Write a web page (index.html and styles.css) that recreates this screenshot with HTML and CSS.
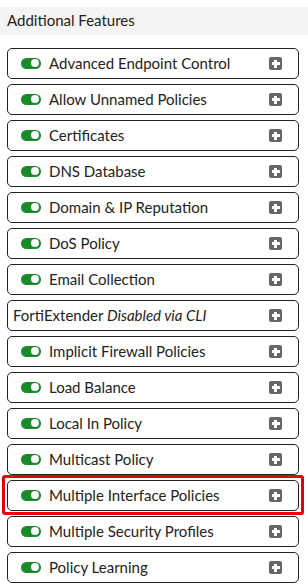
FILE: index.html
```html
<!DOCTYPE html>
<html>
<head>
<meta charset="utf-8">
<link rel="stylesheet" href="styles.css">
</head>
<body>
<div class="header">Additional Features</div>
<div class="list">
  <div class="row"><span class="toggle"></span><span class="label">Advanced Endpoint Control</span><span class="plus"></span></div>
  <div class="row"><span class="toggle"></span><span class="label">Allow Unnamed Policies</span><span class="plus"></span></div>
  <div class="row"><span class="toggle"></span><span class="label">Certificates</span><span class="plus"></span></div>
  <div class="row"><span class="toggle"></span><span class="label">DNS Database</span><span class="plus"></span></div>
  <div class="row"><span class="toggle"></span><span class="label">Domain &amp; IP Reputation</span><span class="plus"></span></div>
  <div class="row"><span class="toggle"></span><span class="label">DoS Policy</span><span class="plus"></span></div>
  <div class="row"><span class="toggle"></span><span class="label">Email Collection</span><span class="plus"></span></div>
  <div class="row plain"><span class="label">FortiExtender <em>Disabled via CLI</em></span><span class="plus"></span></div>
  <div class="row"><span class="toggle"></span><span class="label">Implicit Firewall Policies</span><span class="plus"></span></div>
  <div class="row"><span class="toggle"></span><span class="label">Load Balance</span><span class="plus"></span></div>
  <div class="row"><span class="toggle"></span><span class="label">Local In Policy</span><span class="plus"></span></div>
  <div class="row"><span class="toggle"></span><span class="label">Multicast Policy</span><span class="plus"></span></div>
  <div class="row highlight"><span class="toggle"></span><span class="label">Multiple Interface Policies</span><span class="plus"></span></div>
  <div class="row"><span class="toggle"></span><span class="label">Multiple Security Profiles</span><span class="plus"></span></div>
  <div class="row"><span class="toggle"></span><span class="label">Policy Learning</span><span class="plus"></span></div>
</div>
</body>
</html>
```
FILE: styles.css
```css
html, body {
  margin: 0;
  padding: 0;
  background: #fff;
}
body {
  font-family: Lato, "Open Sans", sans-serif;
  color: #222;
  overflow: hidden;
}
.header {
  margin-top: 7px;
  height: 28px;
  line-height: 27px;
  background: #f4f4f4;
  padding-left: 7px;
  font-size: 15px;
  color: #222;
}
.list {
  display: flex;
  flex-direction: column;
  gap: 5px;
  padding: 13px 0 0 7px;
}
.row {
  position: relative;
  box-sizing: border-box;
  width: 292px;
  height: 31px;
  border: 1px solid #222;
  border-radius: 5px;
  display: flex;
  align-items: center;
  padding-left: 13px;
  padding-right: 16px;
  padding-bottom: 1px;
  font-size: 15px;
}
.row.plain {
  padding-left: 5px;
}
.row.highlight::before {
  content: "";
  position: absolute;
  left: -6px;
  right: -6px;
  top: -6px;
  bottom: -5px;
  border: 3px solid #e8000b;
  border-radius: 3px;
  pointer-events: none;
}
.toggle {
  position: relative;
  width: 20px;
  height: 11px;
  border-radius: 6px;
  background: #1b8a2b;
  margin-right: 8px;
  flex: none;
}
.toggle::after {
  content: "";
  position: absolute;
  right: 2px;
  top: 1.5px;
  width: 8px;
  height: 8px;
  border-radius: 50%;
  background: #fff;
}
.label {
  flex: 1;
  white-space: nowrap;
}
.plus {
  position: relative;
  width: 13px;
  height: 13px;
  border-radius: 2px;
  background: #666;
  flex: none;
  margin-top: 1px;
}
.plus::before, .plus::after {
  content: "";
  position: absolute;
  background: #fff;
}
.plus::before {
  left: 2.5px;
  top: 5px;
  width: 8px;
  height: 3px;
}
.plus::after {
  left: 5px;
  top: 2.5px;
  width: 3px;
  height: 8px;
}
```
